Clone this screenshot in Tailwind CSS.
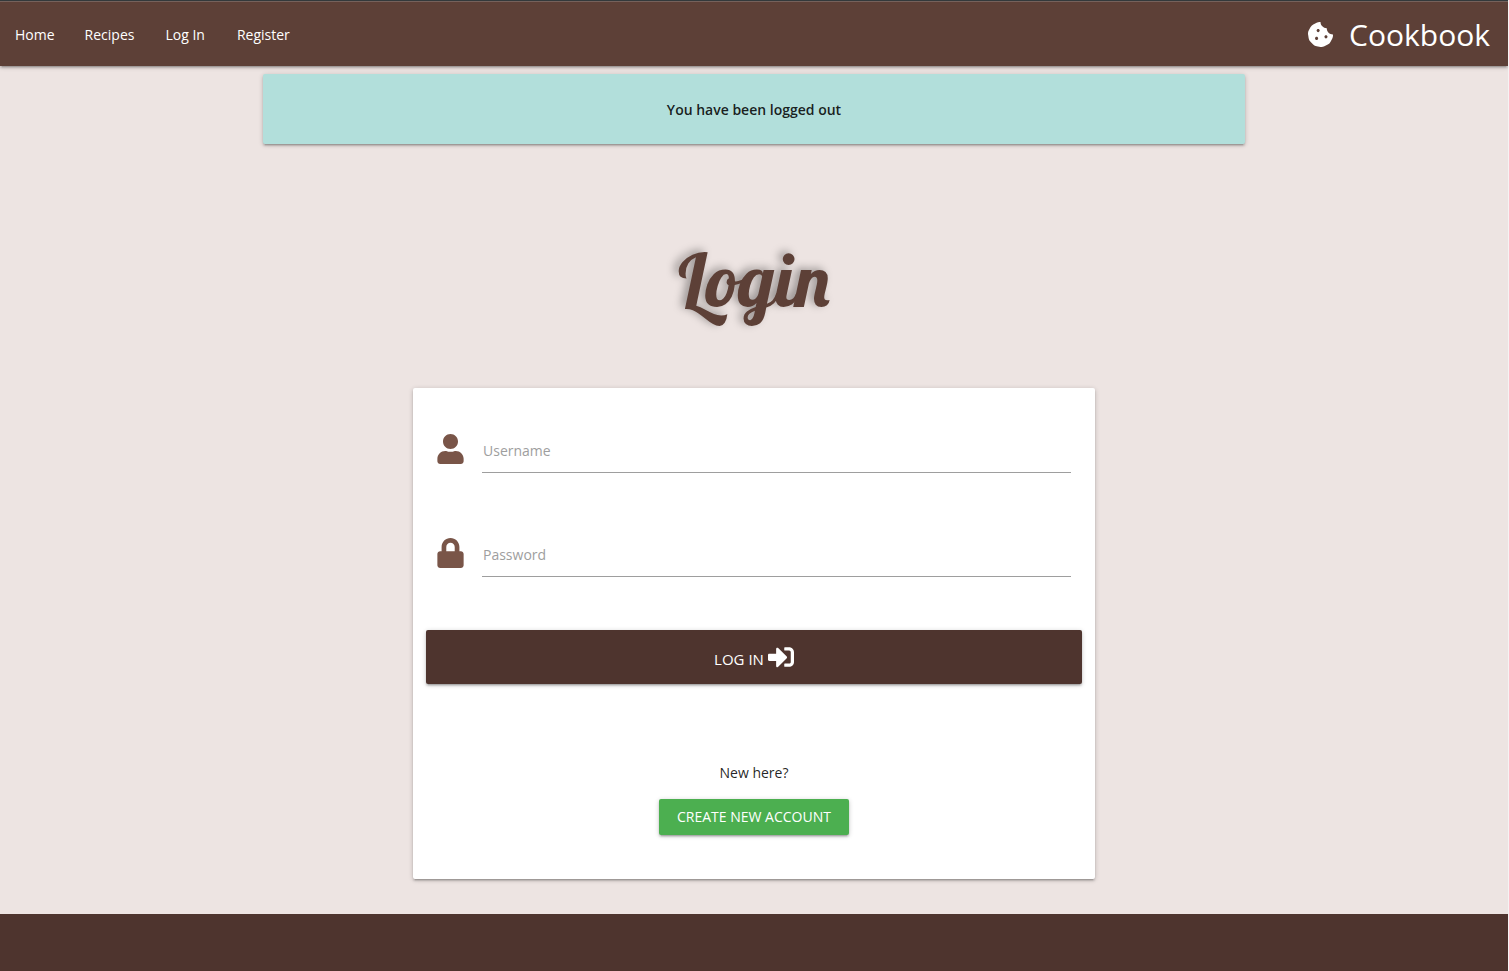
<!DOCTYPE html>
<html lang="en">
<head>
<meta charset="utf-8">
<meta name="viewport" content="width=device-width, initial-scale=1">
<title>Cookbook - Login</title>
<script src="https://cdn.jsdelivr.net/npm/@tailwindcss/browser@4"></script>
</head>
<body class="flex min-h-screen flex-col border-r border-[#f5f3f4] bg-[#ede4e2] font-['Open_Sans','Noto_Sans',sans-serif] text-sm text-black/87">
<header class="relative border-t border-[#33393b] bg-[#5d4037] text-white shadow-[0_2px_2px_0_rgba(0,0,0,0.14),0_3px_1px_-2px_rgba(0,0,0,0.12),0_1px_5px_0_rgba(0,0,0,0.2)]">
  <nav class="flex h-[65px] items-center justify-between border-t border-[#75615b] pr-[18px]">
    <ul class="flex">
      <li><a href="#" class="block px-[15px] pt-[18px] pb-4">Home</a></li>
      <li><a href="#" class="block px-[15px] pt-[18px] pb-4">Recipes</a></li>
      <li><a href="#" class="block px-4 pt-[18px] pb-4">Log In</a></li>
      <li><a href="#" class="block px-4 pt-[18px] pb-4">Register</a></li>
    </ul>
    <a href="#" class="flex items-center gap-4 text-[30px]">
      <svg class="size-[25px]" viewBox="0 0 512 512" fill="currentColor" aria-hidden="true"><path d="M510.52 255.82c-69.97-.85-126.47-57.69-126.47-127.86-70.17 0-127-56.49-127.86-126.45-27.26-4.14-55.13.3-79.72 12.82l-69.13 35.22a132.221 132.221 0 0 0-57.79 57.81l-35.1 68.88a132.645 132.645 0 0 0-12.82 80.95l12.08 76.27a132.521 132.521 0 0 0 37.16 72.96l54.77 54.76a132.036 132.036 0 0 0 72.71 37.06l76.71 12.15c27.51 4.36 55.7-.11 80.53-12.76l69.13-35.21a132.273 132.273 0 0 0 57.79-57.81l35.1-68.88c12.56-24.64 17.01-52.58 12.91-79.91zM176 368c-17.67 0-32-14.33-32-32s14.33-32 32-32 32 14.33 32 32-14.33 32-32 32zm32-160c-17.67 0-32-14.33-32-32s14.33-32 32-32 32 14.33 32 32-14.33 32-32 32zm160 128c-17.67 0-32-14.33-32-32s14.33-32 32-32 32 14.33 32 32-14.33 32-32 32z"/></svg>
      <span class="pt-0.5">Cookbook</span>
    </a>
  </nav>
</header>
<main class="flex grow flex-col items-center px-4 pt-2 pb-[35px]">
  <p role="status" class="w-full max-w-[982px] rounded-xs bg-[#b2dfdb] pt-[25px] pb-[23px] text-center leading-[22px] font-semibold shadow-[0_2px_2px_0_rgba(0,0,0,0.14),0_3px_1px_-2px_rgba(0,0,0,0.12),0_1px_5px_0_rgba(0,0,0,0.2)]">You have been logged out</p>
  <h1 class="pt-[88px] pb-[60px] font-[Lobster,'Liberation_Serif',serif] text-[74px] leading-24 font-normal text-[#5d4037] [text-shadow:-4px_-2px_8px_rgba(0,0,0,0.35)]">Login</h1>
  <section class="w-full max-w-[682px] rounded-xs bg-white px-[13px] pt-[34px] pb-11 text-center shadow-[0_2px_2px_0_rgba(0,0,0,0.14),0_3px_1px_-2px_rgba(0,0,0,0.12),0_1px_5px_0_rgba(0,0,0,0.2)]">
    <form>
      <div class="mx-[11px] flex items-center gap-[18px]">
        <label for="username" aria-label="Username" class="pt-0.5 text-[#795548]"><svg class="h-[30px] w-[27px]" viewBox="0 0 448 512" fill="currentColor" aria-hidden="true"><path d="M224 256c70.7 0 128-57.3 128-128S294.7 0 224 0 96 57.3 96 128s57.3 128 128 128zm89.6 32h-16.7c-22.2 10.2-46.9 16-72.9 16s-50.6-5.8-72.9-16h-16.7C60.2 288 0 348.2 0 422.4V464c0 26.5 21.5 48 48 48h352c26.5 0 48-21.5 48-48v-41.6c0-74.2-60.2-134.4-134.4-134.4z"/></svg></label>
        <input id="username" type="text" placeholder="Username" class="h-[51px] min-w-0 grow border-b border-[#9e9e9e] pt-1.5 pl-px outline-none placeholder:text-[#9e9e9e]">
      </div>
      <div class="mx-[11px] mt-[53px] flex items-center gap-[18px]">
        <label for="password" aria-label="Password" class="pt-0.5 text-[#795548]"><svg class="h-[30px] w-[27px]" viewBox="0 0 448 512" fill="currentColor" aria-hidden="true"><path d="M400 224h-24v-72C376 68.2 307.8 0 224 0S72 68.2 72 152v72H48c-26.5 0-48 21.5-48 48v192c0 26.5 21.5 48 48 48h352c26.5 0 48-21.5 48-48V272c0-26.5-21.5-48-48-48zm-104 0H152v-72c0-39.7 32.3-72 72-72s72 32.3 72 72v72z"/></svg></label>
        <input id="password" type="password" placeholder="Password" class="h-[51px] min-w-0 grow border-b border-[#9e9e9e] pt-1.5 pl-px outline-none placeholder:text-[#9e9e9e]">
      </div>
      <button type="submit" class="mt-[53px] flex h-[54px] w-full items-center justify-center gap-1 rounded-xs bg-[#4e342e] text-white shadow-[0_2px_2px_0_rgba(0,0,0,0.14),0_3px_1px_-2px_rgba(0,0,0,0.12),0_1px_5px_0_rgba(0,0,0,0.2)]"><span class="pt-1.5 text-[15px]">LOG IN</span><svg class="size-[26px]" viewBox="0 0 512 512" fill="currentColor" aria-hidden="true"><path d="M416 448h-84c-6.6 0-12-5.4-12-12v-40c0-6.6 5.4-12 12-12h84c17.7 0 32-14.3 32-32V160c0-17.7-14.3-32-32-32h-84c-6.6 0-12-5.4-12-12V76c0-6.6 5.4-12 12-12h84c53 0 96 43 96 96v192c0 53-43 96-96 96zm-47-201L201 79c-15-15-41-4.5-41 17v96H24c-13.3 0-24 10.7-24 24v96c0 13.3 10.7 24 24 24h136v96c0 21.5 26 32 41 17l168-168c9.3-9.4 9.3-24.6 0-34z"/></svg></button>
    </form>
    <p class="mt-[78px] leading-[22px]">New here?</p>
    <a href="#" class="mt-[15px] inline-block rounded-xs bg-[#4caf50] px-[18px] align-top leading-9 text-white shadow-[0_2px_2px_0_rgba(0,0,0,0.14),0_3px_1px_-2px_rgba(0,0,0,0.12),0_1px_5px_0_rgba(0,0,0,0.2)]">CREATE NEW ACCOUNT</a>
  </section>
</main>
<footer class="h-[57px] shrink-0 bg-[#4e342e]"></footer>
</body>
</html>
